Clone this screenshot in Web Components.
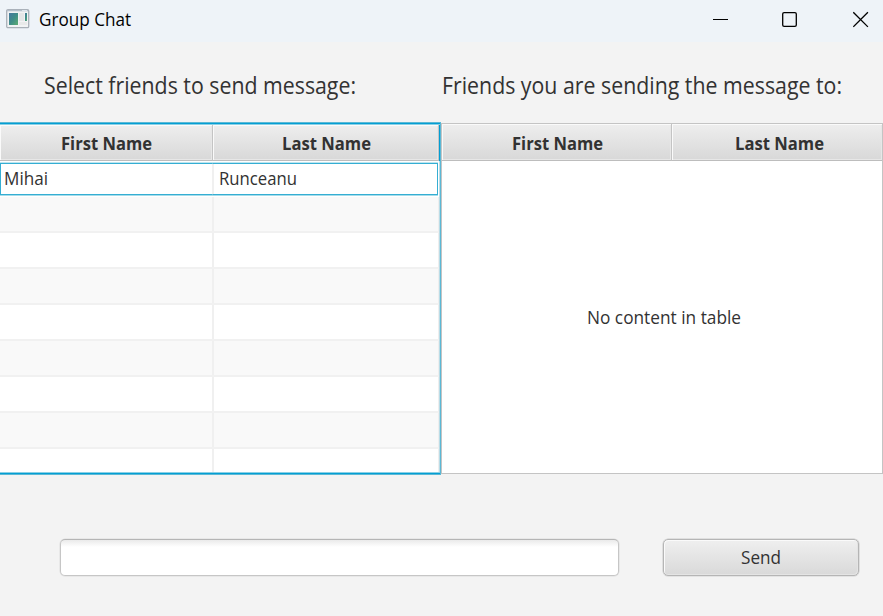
<!DOCTYPE html>
<html lang="en"><head><meta charset="utf-8"><title>Group Chat</title>
<style>html,body{margin:0;height:100%;overflow:hidden}body{font-family:"Open Sans","Noto Sans",sans-serif;color:#323232}</style></head>
<body><chat-window></chat-window>
<script>
// Single-line label condensed horizontally to a given width.
class FitText extends HTMLElement{
  connectedCallback(){
    const r=this.attachShadow({mode:'open'});
    r.innerHTML=`<style>:host{display:block;white-space:nowrap;flex:none}span{display:inline-block;transform-origin:0 50%}</style><span></span>`;
    const s=r.querySelector('span');s.textContent=this.getAttribute('text');
    const w=+this.getAttribute('w');
    s.style.fontSize=this.getAttribute('size')+'px';
    this.style.width=w+'px';
    s.style.transform=`scaleX(${w/s.getBoundingClientRect().width})`;
  }
}
class TitleBar extends HTMLElement{
  connectedCallback(){
    this.attachShadow({mode:'open'}).innerHTML=`<style>
    :host{display:flex;height:42px;box-sizing:border-box;background:#eef3f8;color:#000;padding-left:6px;align-items:flex-start}
    .icon{margin:9px 9px 0 0}fit-text{line-height:24px;margin-top:7px}
    .controls{margin-left:auto;display:flex;padding:11px 14px 0 0;gap:54px}svg{display:block;flex:none}.controls svg:last-child{margin-left:1px}
    </style>
    <svg class="icon" width="24" height="20" viewBox="0 0 24 20"><defs><linearGradient id="g" x2="1" y2="1"><stop stop-color="#4678a0"/><stop offset=".5" stop-color="#3f8d88"/><stop offset="1" stop-color="#5cad72"/></linearGradient></defs>
    <rect x=".7" y=".7" width="22" height="18" rx="1.3" fill="#f1f3f4" stroke="#a9b0b8" stroke-width="1.3"/><path d="M1 1.6h21" stroke="#b5c0cb" stroke-width="1.4"/><path d="M16 1.6h5" stroke="#e4eaf0"/><rect x="3" y="4" width="9" height="12" fill="url(#g)"/><rect x="13" y="4" width="5" height="8" fill="#e5e6e7"/><rect x="13" y="13" width="8" height="3" fill="#e8e9e9"/><rect x="19" y="4" width="2" height="8" fill="url(#g)"/></svg>
    <fit-text text="Group Chat" size="17.6" w="92"></fit-text>
    <div class="controls">
    <svg width="15" height="17"><path d="M0 8.5h15" stroke="#000"/></svg>
    <svg width="16" height="17"><rect x=".7" y="1.7" width="13.6" height="13.6" rx="1.4" fill="none" stroke="#000" stroke-width="1.3"/></svg>
    <svg width="16" height="17"><path d="M.3 1.3l14.6 14.6M14.9 1.3L.3 15.9" stroke="#000" stroke-width="1.3"/></svg></div>`;
  }
}
class HeaderCell extends HTMLElement{
  connectedCallback(){
    this.attachShadow({mode:'open'}).innerHTML=`<style>
    :host{display:flex;justify-content:center;box-sizing:border-box;height:36px;background:linear-gradient(#eee,#d8d8d8);border-bottom:1px solid #bdbdbd;border-right:1px solid #c4c4c4;box-shadow:inset 1px 1px #fafafa,inset -1px -1px #e7e7e7;font-weight:700;line-height:37px;padding-left:1px}
    </style><slot></slot>`;
  }
}
class FriendTable extends HTMLElement{
  connectedCallback(){
    this.attachShadow({mode:'open'}).innerHTML=`<style>
    :host{display:block;width:441px;height:353px;box-sizing:border-box;border:solid #5bb8d5;border-width:1px 1px 1px 0;box-shadow:inset 0 1px #039ed3,inset 0 2px #8bd0e5,inset 0 -1px #039ed3,inset 0 -2px #8bd0e5,inset -1px 0 #b9dce7;padding:2px 0 2px 0;background:#fff;overflow:hidden}
    .head{display:grid;grid-template-columns:213px 226px;height:36px;border-right:1px solid #039ed3}
    .body{height:311px;overflow:hidden;margin-right:1px}
    .row{display:grid;grid-template-columns:213px 1fr;height:36px;box-sizing:border-box;border-bottom:2px solid #f1f1f1;border-right:1px solid #eee}
    .row>*{padding-left:6px;line-height:34px}.row>*:first-child{border-right:2px solid #f0f0f0;margin-right:-1px;padding-left:4px}
    .row:nth-child(even){background:#f9f9f9}
    .row.focus{border:0;padding:1px 1px 0 0;margin-top:1px;height:35px}
    .focus>*{box-sizing:border-box;height:32px;border:1px solid #35aed3;border-left:0;box-shadow:0 1px #a5dcea,0 -1px #bde5f0;line-height:28px}
    .focus>*:first-child{border-left:1px solid #35aed3;padding-left:3px}
    </style><div class="head"><header-cell><fit-text text="First Name" size="17.6" w="91"></fit-text></header-cell><header-cell><fit-text text="Last Name" size="17.6" w="89"></fit-text></header-cell></div>
    <div class="body"><div class="row focus"><div><fit-text text="Mihai" size="17.6" w="44"></fit-text></div><div><fit-text text="Runceanu" size="17.6" w="78"></fit-text></div></div>${'<div class="row"><div></div><div></div></div>'.repeat(8)}</div>`;
  }
}
class EmptyTable extends HTMLElement{
  connectedCallback(){
    this.attachShadow({mode:'open'}).innerHTML=`<style>
    :host{display:flex;flex-direction:column;flex:1;height:351px;margin-top:1px;box-sizing:border-box;border:1px solid #c4c4c4;background:#fff}
    .head{display:grid;grid-template-columns:230px 1fr;height:37px}header-cell{height:37px;line-height:39px}.head>:first-child{padding-left:2px}.head>:last-child{border-right:0}
    .body{flex:1;display:flex;align-items:center;justify-content:center;padding-left:4px}
    </style><div class="head"><header-cell><fit-text text="First Name" size="17.6" w="91"></fit-text></header-cell><header-cell style="padding-left:4px"><fit-text text="Last Name" size="17.6" w="89"></fit-text></header-cell></div><div class="body"><fit-text text="No content in table" size="17.6" w="154"></fit-text></div>`;
  }
}
class ChatWindow extends HTMLElement{
  connectedCallback(){
    this.attachShadow({mode:'open'}).innerHTML=`<style>
    :host{display:flex;flex-direction:column;width:883px;height:616px;background:#f3f3f3}
    .titles{display:flex;height:80px;box-sizing:border-box;padding:28px 0 0 44px;gap:86px;line-height:32px}
    .tables{display:flex;height:353px;align-items:flex-start}
    .compose{display:flex;padding:64px 24px 0 60px;justify-content:space-between}
    .input,.send{box-sizing:border-box;height:37px;border-radius:5px}
    .input{width:559px;border:1px solid #c6c6c6;border-top-color:#b5b5b5;background:linear-gradient(#eaeaea,#fff 7px);box-shadow:0 0 0 .5px #ddd}
    .send{width:196px;display:flex;justify-content:center;border:1px solid #b5b5b5;background:linear-gradient(#efefef,#d9d9d9);box-shadow:inset 1px 1px #fafafa,inset -1px -1px #e4e4e4,0 0 0 .5px #ccc,0 1px #fafafa;line-height:35px}
    </style><title-bar></title-bar>
    <div class="titles"><fit-text text="Select friends to send message:" size="22.8" w="312"></fit-text><fit-text text="Friends you are sending the message to:" size="22.8" w="400"></fit-text></div>
    <div class="tables"><friend-table></friend-table><empty-table></empty-table></div>
    <div class="compose"><div class="input"></div><div class="send" role="button"><fit-text text="Send" size="17.6" w="40"></fit-text></div></div>`;
  }
}
[['fit-text',FitText],['title-bar',TitleBar],['header-cell',HeaderCell],['friend-table',FriendTable],['empty-table',EmptyTable],['chat-window',ChatWindow]].forEach(([n,c])=>customElements.define(n,c));
</script></body></html>
